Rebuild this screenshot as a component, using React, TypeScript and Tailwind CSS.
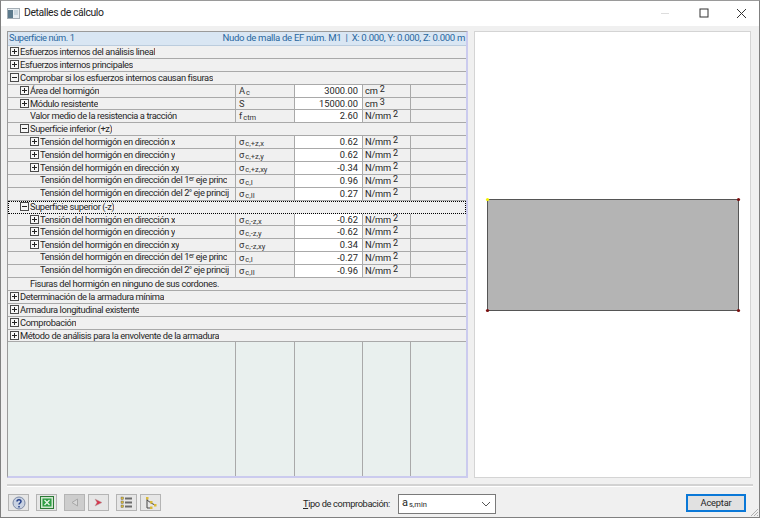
import React from "react";

const Box = ({ open }: { open?: boolean }) => (
  <svg width="9" height="9" viewBox="0 0 9 9" className="shrink-0 mr-[1px]">
    <rect x="0.5" y="0.5" width="8" height="8" fill="#f7f7f7" stroke="#4a4a4a" />
    <path d={open ? "M2 4.5h5" : "M2 4.5h5M4.5 2v5"} stroke="#222" />
  </svg>
);

const Sym = ({ b, s, big }: { b: string; s?: string; big?: boolean }) => (
  <span className={"whitespace-nowrap tracking-[0px] " + (big ? "text-[11px]" : "")}>
    {b}
    {s && <span className="text-[7.5px] relative top-[1px] ml-[1px]">{s}</span>}
  </span>
);

const Unit = ({ u, p }: { u: string; p: string }) => (
  <span className="whitespace-nowrap tracking-[-0.2px]">
    {u}
    <span className="text-[9px] relative top-[-2px] ml-[2px]">{p}</span>
  </span>
);

type Row = {
  label: React.ReactNode;
  indent?: number;
  icon?: "plus" | "minus";
  sym?: [string, string?];
  val?: string;
  unit?: [string, string];
  focus?: boolean;
};

const er = (
  <>
    Tensión del hormigón en dirección del 1<span className="text-[6.5px] relative top-[-2px]">er</span> eje princ
  </>
);
const seg = (
  <>
    Tensión del hormigón en dirección del 2<span className="text-[6.5px] relative top-[-2px]">º</span> eje princij
  </>
);
const nmm: [string, string] = ["N/mm", "2"];

const rows: Row[] = [
  { label: "Esfuerzos internos del análisis lineal", indent: 0, icon: "plus" },
  { label: "Esfuerzos internos principales", indent: 0, icon: "plus" },
  { label: "Comprobar si los esfuerzos internos causan fisuras", indent: 0, icon: "minus" },
  { label: "Área del hormigón", indent: 1, icon: "plus", sym: ["A", "c"], val: "3000.00", unit: ["cm", "2"] },
  { label: "Módulo resistente", indent: 1, icon: "plus", sym: ["S"], val: "15000.00", unit: ["cm", "3"] },
  { label: "Valor medio de la resistencia a tracción", indent: 1, sym: ["f", "ctm"], val: "2.60", unit: nmm },
  { label: "Superficie inferior (+z)", indent: 1, icon: "minus" },
  { label: "Tensión del hormigón en dirección x", indent: 2, icon: "plus", sym: ["σ", "c,+z,x"], val: "0.62", unit: nmm },
  { label: "Tensión del hormigón en dirección y", indent: 2, icon: "plus", sym: ["σ", "c,+z,y"], val: "0.62", unit: nmm },
  { label: "Tensión del hormigón en dirección xy", indent: 2, icon: "plus", sym: ["σ", "c,+z,xy"], val: "-0.34", unit: nmm },
  { label: er, indent: 2, sym: ["σ", "c,I"], val: "0.96", unit: nmm },
  { label: seg, indent: 2, sym: ["σ", "c,II"], val: "0.27", unit: nmm },
  { label: "Superficie superior (-z)", indent: 1, icon: "minus", focus: true },
  { label: "Tensión del hormigón en dirección x", indent: 2, icon: "plus", sym: ["σ", "c,-z,x"], val: "-0.62", unit: nmm },
  { label: "Tensión del hormigón en dirección y", indent: 2, icon: "plus", sym: ["σ", "c,-z,y"], val: "-0.62", unit: nmm },
  { label: "Tensión del hormigón en dirección xy", indent: 2, icon: "plus", sym: ["σ", "c,-z,xy"], val: "0.34", unit: nmm },
  { label: er, indent: 2, sym: ["σ", "c,I"], val: "-0.27", unit: nmm },
  { label: seg, indent: 2, sym: ["σ", "c,II"], val: "-0.96", unit: nmm },
  { label: "Fisuras del hormigón en ninguno de sus cordones.", indent: 1 },
  { label: "Determinación de la armadura mínima", indent: 0, icon: "plus" },
  { label: "Armadura longitudinal existente", indent: 0, icon: "plus" },
  { label: "Comprobación", indent: 0, icon: "plus" },
  { label: "Método de análisis para la envolvente de la armadura", indent: 0, icon: "plus" },
];

const TableRow = ({ r }: { r: Row }) => {
  const iconIndent = ["pl-[2px]", "pl-[12px]", "pl-[22px]"][r.indent ?? 0];
  const plainIndent = ["pl-[12px]", "pl-[22px]", "pl-[32px]"][r.indent ?? 0];
  const focusIndent = r.focus ? "pl-[11px]" : r.icon ? iconIndent : plainIndent;
  const hasCols = !!r.sym;
  const base = r.focus
    ? "h-[12.9px] flex border border-dotted border-black"
    : "h-[12.9px] flex border-b border-[#a9a9a9]";
  return (
    <div className={base + " box-border leading-[11px]"}>
      <div
        className={
          "flex items-center pb-[1px] whitespace-nowrap min-w-0 " +
          (hasCols ? "w-[228px] shrink-0 border-r border-[#a9a9a9] pr-[2px] " : "flex-1 ") +
          focusIndent
        }
      >
        {r.icon && <Box open={r.icon === "minus"} />}
        <span className="overflow-hidden min-w-0">{r.label}</span>
      </div>
      {hasCols && (
        <>
          <div className="w-[59px] shrink-0 border-r border-[#a9a9a9] pl-[3px] text-[#333]">
            <Sym b={r.sym![0]} s={r.sym![1]} />
          </div>
          <div className="w-[68px] shrink-0 border-r border-[#a9a9a9] bg-white text-right pr-[4px] tracking-[0px]">{r.val}</div>
          <div className="w-[48px] shrink-0 border-r border-[#a9a9a9] pl-[2px]">
            <Unit u={r.unit![0]} p={r.unit![1]} />
          </div>
          <div className="flex-1" />
        </>
      )}
    </div>
  );
};

const ToolBtn = ({ children, disabled, cls }: { children: React.ReactNode; disabled?: boolean; cls?: string }) => (
  <div
    className={
      "w-[21px] h-[17px] flex items-center justify-center border border-[#b4b4b4] " +
      (disabled ? "bg-[#cdcdcd] " : "bg-[#e6e6e6] ") +
      (cls ?? "")
    }
  >
    {children}
  </div>
);

export default function App() {
  return (
    <div
      className="w-[760px] h-[518px] box-border border border-[#808080] border-t-[#9a9a9a] bg-[#f0f0f0] flex flex-col text-[9.3px] tracking-[-0.39px] text-[#262626] overflow-hidden relative"
      style={{ fontFamily: 'Roboto, "Liberation Sans", sans-serif' }}
    >
      {/* title bar */}
      <div className="h-[25px] bg-white flex items-center shrink-0 pb-[1px]">
        <svg width="13" height="11" viewBox="0 0 13 11" className="ml-[6px] mr-[3px]">
          <rect x="0.5" y="0.5" width="12" height="10" fill="#e8eef2" stroke="#a5aeb5" />
          <rect x="1" y="2" width="5" height="8" fill="#5c7a8c" />
          <rect x="7" y="2" width="4" height="5" fill="#c9d6de" />
        </svg>
        <span className="text-[10.4px] tracking-[-0.4px] text-[#222] ml-[1px]">Detalles de cálculo</span>
        <div className="flex-1" />
        <svg width="10" height="10" viewBox="0 0 10 10" className="mr-[29px]">
          <path d="M1 5.5h8" stroke="#dddddd" />
        </svg>
        <svg width="10" height="10" viewBox="0 0 10 10" className="mr-[27px]">
          <rect x="1" y="1" width="8" height="8" fill="none" stroke="#333" />
        </svg>
        <svg width="11" height="11" viewBox="0 0 11 11" className="mr-[12px]">
          <path d="M1 1l9 9M10 1l-9 9" stroke="#333" />
        </svg>
      </div>

      {/* main */}
      <div className="flex gap-[6px] pl-[6px] pr-[8px] pt-[5px] shrink-0">
        <div className="w-[461px] h-[447px] flex flex-col box-border border-l border-t border-[#9a9a9a] border-r-2 border-r-[#cbcbee] border-b-2 border-b-[#cbcbee]">
          <div className="h-[13px] shrink-0 bg-[#d9e6f3] flex justify-between text-[#2a689f] pl-[1px] pr-[1px] leading-[12px] border-b border-[#bbccdd] box-content">
            <span>Superficie núm. 1</span>
            <span className="text-[9.6px] tracking-[-0.33px]">Nudo de malla de EF núm. M1 &nbsp;|&nbsp; X: 0.000, Y: 0.000, Z: 0.000 m</span>
          </div>
          {rows.map((r, i) => (
            <TableRow key={i} r={r} />
          ))}
          <div className="flex-1 flex bg-[#e9f0ee]">
            <div className="w-[228px] shrink-0 border-r border-[#a9a9a9]" />
            <div className="w-[59px] shrink-0 border-r border-[#a9a9a9]" />
            <div className="w-[68px] shrink-0 border-r border-[#a9a9a9]" />
            <div className="w-[48px] shrink-0 border-r border-[#a9a9a9]" />
          </div>
        </div>
        <div className="w-[277px] h-[447px] bg-white border border-[#d4d4d4] box-border flex items-center justify-center">
          <svg width="256" height="116" viewBox="0 0 256 116">
            <rect x="2.5" y="2.5" width="251" height="111" fill="#b4b4b4" stroke="#555" />
            <circle cx="2.5" cy="2.5" r="1.6" fill="#f2f200" />
            <circle cx="253.5" cy="2.5" r="1.6" fill="#7a1010" />
            <circle cx="2.5" cy="113.5" r="1.6" fill="#7a1010" />
            <circle cx="253.5" cy="113.5" r="1.6" fill="#7a1010" />
          </svg>
        </div>
      </div>

      {/* separator */}
      <div className="mx-[6px] mt-[6px] h-[2px] bg-[#d2d2d2] border-b border-white box-content shrink-0" />

      {/* footer */}
      <div className="flex items-start pl-[7px] pr-[13px] pt-[7px] flex-1">
        <div className="flex items-center">
          <ToolBtn cls="mr-[7px]">
            <svg width="14" height="14" viewBox="0 0 14 14">
              <circle cx="7" cy="7" r="6" fill="#c9d2e2" stroke="#7c8aa5" />
              <path d="M5 5.5c0-2.5 4-2.5 4 0 0 1.5-2 1.5-2 3" fill="none" stroke="#24408a" strokeWidth="1.5" />
              <path d="M7 10v1.5" stroke="#24408a" strokeWidth="1.5" />
            </svg>
          </ToolBtn>
          <ToolBtn cls="mr-[7px]">
            <svg width="14" height="13" viewBox="0 0 14 13">
              <rect x="0.5" y="0.5" width="13" height="12" fill="#cfe6cf" stroke="#2c7a36" />
              <rect x="2.5" y="2.5" width="9" height="8" fill="#2f9e44" />
              <path d="M4.5 4l5 5M9.5 4l-5 5" stroke="#e8f5e8" strokeWidth="1.3" />
            </svg>
          </ToolBtn>
          <ToolBtn disabled cls="mr-[3px]">
            <svg width="8" height="9" viewBox="0 0 8 9">
              <path d="M6.5 1v7L1 4.5z" fill="#d8d8d8" stroke="#a8a8a8" />
            </svg>
          </ToolBtn>
          <ToolBtn cls="mr-[7px]">
            <svg width="9" height="9" viewBox="0 0 9 9">
              <path d="M1 1l7 3.5L1 8l2-3.5z" fill="#d8334a" stroke="#b0a0a0" strokeWidth="0.5" />
            </svg>
          </ToolBtn>
          <ToolBtn cls="mr-[3px]">
            <svg width="13" height="13" viewBox="0 0 13 13">
              <path d="M5 2.5h7M5 6.5h7M5 10.5h7" stroke="#6b6b6b" strokeWidth="2" />
              <rect x="1" y="1" width="2.5" height="2.5" fill="#d9b93a" stroke="#555" strokeWidth="0.4" />
              <rect x="1" y="5" width="2.5" height="2.5" fill="#d9b93a" stroke="#555" strokeWidth="0.4" />
              <rect x="1" y="9" width="2.5" height="2.5" fill="#d9b93a" stroke="#555" strokeWidth="0.4" />
            </svg>
          </ToolBtn>
          <ToolBtn>
            <svg width="14" height="14" viewBox="0 0 14 14">
              <path d="M3 1v11M3 4l4 3M7 7l4 2M3 12h4" stroke="#444" fill="none" />
              <rect x="2" y="1" width="2.5" height="2.5" fill="#d9b93a" />
              <rect x="6" y="5" width="2.5" height="2.5" fill="#d9b93a" />
              <rect x="10" y="8" width="2.5" height="2.5" fill="#d9b93a" />
              <rect x="6" y="10.5" width="2.5" height="2.5" fill="#d9b93a" />
            </svg>
          </ToolBtn>
        </div>
        <div className="flex items-center ml-[142px] h-[19px]">
          <span className="w-[88px] whitespace-nowrap">
            <span className="underline">T</span>ipo de comprobación:
          </span>
          <div className="w-[98px] h-[20px] ml-[7px] box-border border border-[#7a7a7a] bg-white flex items-center justify-between pl-[3px] pr-[4px]">
            <Sym b="a" s="s,min" big />
            <svg width="10" height="6" viewBox="0 0 10 6">
              <path d="M1 1l4 4 4-4" fill="none" stroke="#555" />
            </svg>
          </div>
        </div>
        <div className="flex-1" />
        <div className="w-[60px] h-[18px] box-border border-2 border-[#0a78d7] bg-[#e1e1e1] flex items-center justify-center tracking-[-0.2px]">
          Aceptar
        </div>
      </div>
      <svg width="10" height="10" viewBox="0 0 10 10" className="absolute right-0 bottom-0">
        <path d="M9 2L2 9M9 5L5 9M9 8L8 9" stroke="#b0b0b0" />
      </svg>
    </div>
  );
}
